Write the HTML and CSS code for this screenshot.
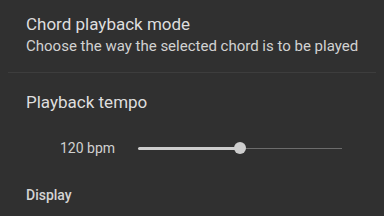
FILE: index.html
```html
<!DOCTYPE html>
<html>
<head>
<meta charset="utf-8">
<link rel="stylesheet" href="styles.css">
</head>
<body>
<div class="screen">
  <div class="pref">
    <div class="pref-title">Chord playback mode</div>
    <div class="pref-summary">Choose the way the selected chord is to be played</div>
  </div>
  <div class="divider"></div>
  <div class="pref tempo">
    <div class="pref-title">Playback tempo</div>
    <div class="slider-row">
      <span class="slider-label">120 bpm</span>
      <div class="slider">
        <div class="track"></div>
        <div class="track-active" style="width:102px"></div>
        <div class="thumb" style="left:96px"></div>
      </div>
    </div>
  </div>
  <div class="category">Display</div>
</div>
</body>
</html>
```
FILE: styles.css
```css
html, body {
  margin: 0;
  padding: 0;
  background: #303030;
}
.screen {
  width: 384px;
  height: 216px;
  overflow: hidden;
  background: #303030;
  font-family: Roboto, "Noto Sans", sans-serif;
  color: #e0e0e0;
}
.pref {
  padding: 14px 8px 16px 26px;
}
.pref-title {
  font-size: 17px;
  line-height: 21px;
  color: #dedede;
}
.pref-summary {
  margin-top: 1px;
  font-size: 15px;
  line-height: 20px;
  color: #d2d2d2;
}
.divider {
  height: 1px;
  margin: 0 8px;
  background: #3d3d3d;
}
.pref.tempo {
  padding-top: 19px;
  padding-bottom: 0;
}
.slider-row {
  display: flex;
  align-items: center;
  height: 20px;
  margin-top: 25px;
  padding-left: 34px;
}
.slider-label {
  width: 56px;
  font-size: 14px;
  line-height: 20px;
  color: #d0d0d0;
}
.slider {
  position: relative;
  width: 204px;
  height: 12px;
  margin-left: 22px;
}
.track {
  position: absolute;
  left: 0;
  right: 0;
  top: 5.5px;
  height: 1.5px;
  background: #6c6c6c;
}
.track-active {
  position: absolute;
  left: 0;
  top: 4.5px;
  height: 3px;
  border-radius: 1.5px;
  background: #cdcdcd;
}
.thumb {
  position: absolute;
  top: 0;
  width: 12px;
  height: 12px;
  border-radius: 50%;
  background: #cdcdcd;
}
.category {
  margin-top: 27px;
  padding-left: 26px;
  font-size: 14px;
  line-height: 20px;
  font-weight: 500;
  color: #d4d4d4;
}
```
